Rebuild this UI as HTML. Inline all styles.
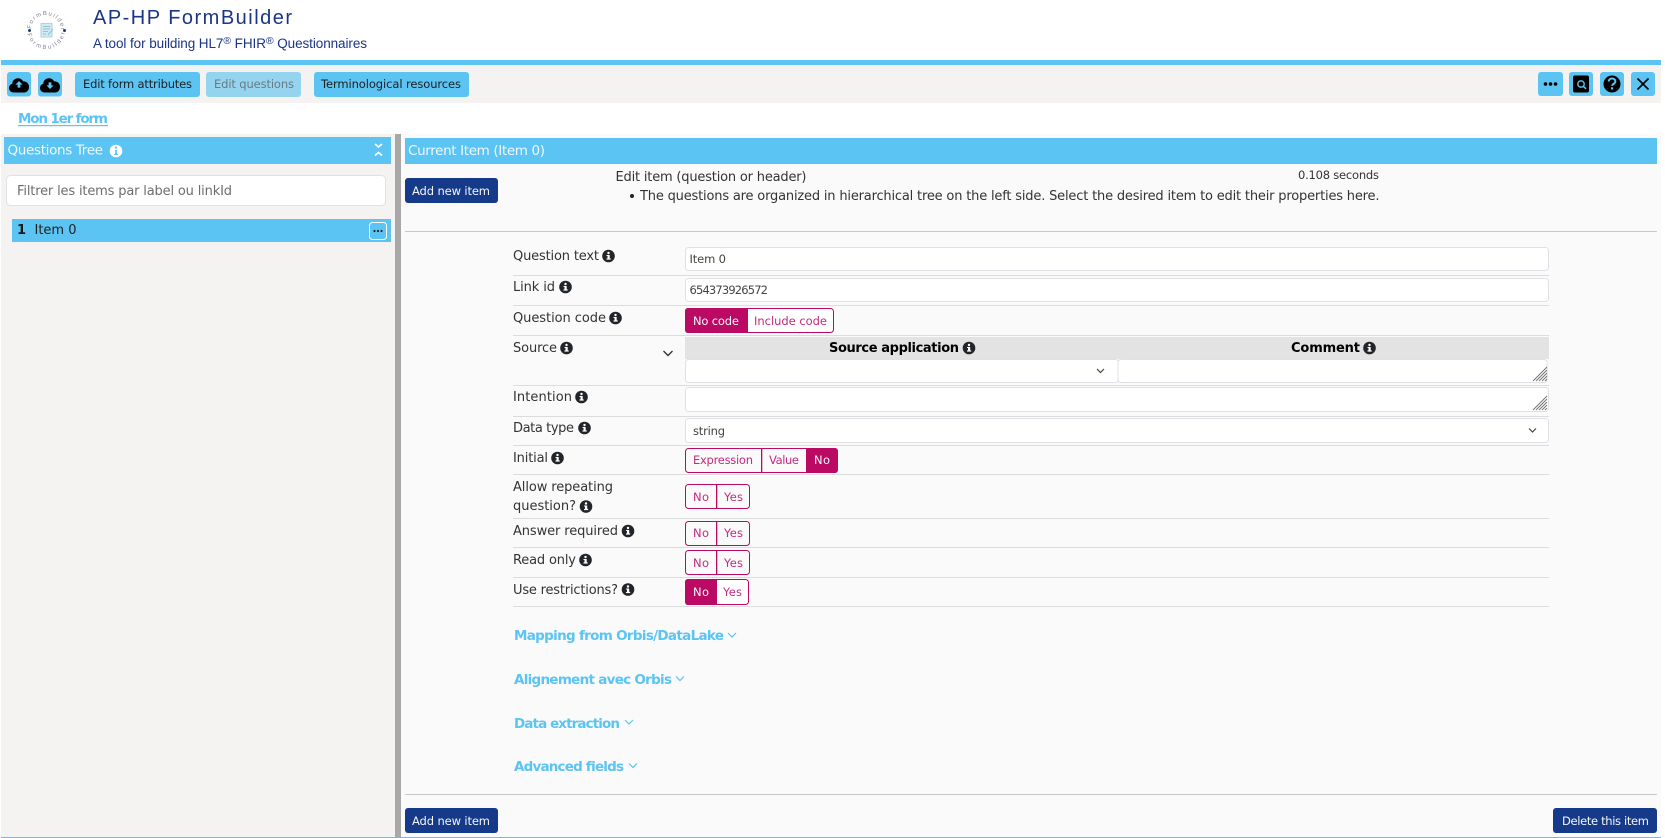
<!DOCTYPE html>
<html lang="en"><head><meta charset="utf-8"><title>AP-HP FormBuilder</title>
<style>
html,body{margin:0;padding:0;background:#fff;width:1665px;height:838px;overflow:hidden}
svg{position:absolute;left:0;top:0;display:block}
text{font-family:"DejaVu Sans",sans-serif;font-size:12.5px;fill:#333;white-space:pre}
.h{font-family:"Liberation Sans",sans-serif;fill:#1a3585}
.l{font-size:13px;fill:#333}
.b{font-size:11.5px;fill:#1f1f1f}
.w{font-size:11.5px;fill:#f4f6fb}
.in{font-size:11.5px;fill:#444}
.m{font-size:11.5px;fill:#c42a80}
.s{font-size:13.5px;font-weight:bold;fill:#5bc4f3}
.th{font-size:13px;font-weight:bold;fill:#000}
.ln{fill:none;stroke:#5bc4f3;stroke-width:1.2}
.box{fill:#fff;stroke:#dee2e6;stroke-width:1}
.tg{fill:#fafafa;stroke:#bb0a63;stroke-width:1}
.fill{fill:#bb0a63}
.logo{font-size:6px;fill:#7f8a98;font-family:"Liberation Sans",sans-serif}
</style></head><body>
<svg width="1665" height="838" viewBox="0 0 1665 838" xmlns="http://www.w3.org/2000/svg">
<defs>
<g id="inf"><circle r="6.3" fill="#212529"/><rect x="-1" y="-1" width="2.2" height="4" fill="#fff"/><rect x="-2" y="-1" width="2" height="1" fill="#fff"/><rect x="-2" y="2.4" width="4.2" height="1.2" fill="#fff"/><circle cx="0" cy="-3" r="1.2" fill="#fff"/></g>
<g id="cloud"><path d="M-5 7.5C-8.4 7.5-10 5.3-10 3C-10 .8-8.6-.9-6.7-1.3C-6.7-4.6-4-6.8-1-6.8C1.2-6.8 3.2-5.6 4.2-3.6C7.6-4 10 -1.3 10 2C10 5 8 7.5 5 7.5Z" fill="#000"/></g>
<path id="arcT" d="M31 30A15 15 0 0 1 61 30"/><path id="arcB" d="M27 30A19 19 0 0 0 65 30"/>
</defs>

<!-- header -->
<text class="logo" letter-spacing="1.3"><textPath href="#arcT" startOffset="1">FormBuilder</textPath></text>
<text class="logo" letter-spacing="2"><textPath href="#arcB" startOffset="4">FormBuilder</textPath></text>
<circle cx="29.500" cy="30.500" r="1.500" fill="#1c3f70"/><circle cx="64.500" cy="30.500" r="1.500" fill="#1c3f70"/>
<rect x="41" y="23.500" width="11" height="13.500" fill="#d4e9f0" stroke="#a8d5e2" stroke-width="1"/>
<path d="M43 26.500h7M43 29h7M43 31.500h5M43 34h3M48 35l5-6" stroke="#8cc6d6" stroke-width="1" fill="none"/>
<text class="h" x="93" y="24" textLength="199" style="font-size:20px">AP-HP FormBuilder</text>
<text class="h" x="93" y="48" textLength="274" style="font-size:13.5px">A tool for building HL7<tspan font-size="10.500" dy="-4">®</tspan><tspan dy="4"> FHIR</tspan><tspan font-size="10.500" dy="-4">®</tspan><tspan dy="4"> Questionnaires</tspan></text>

<rect x="1" y="60" width="1660" height="5" fill="#5bc4f3"/>
<rect x="1" y="65" width="1660" height="38" fill="#f4f3f2"/>

<!-- toolbar -->
<g fill="#5bc4f3">
<rect x="7" y="72" width="24" height="24.500" rx="3"/><rect x="38" y="72" width="24" height="24.500" rx="3"/>
<rect x="75" y="72" width="125" height="25" rx="3"/>
<rect x="206" y="72" width="95" height="25" rx="3" fill="#94d4ef"/>
<rect x="314" y="72" width="155" height="25" rx="3"/>
<rect x="1538" y="72" width="25" height="24" rx="3"/><rect x="1569" y="72" width="24" height="24" rx="3"/><rect x="1600" y="72" width="24" height="24" rx="3"/><rect x="1631" y="72" width="24" height="24" rx="3"/>
</g>
<use href="#cloud" x="19" y="85"/>
<path d="M19 81l-3.600 3.600h2.200v3h2.800v-3h2.200z" fill="#5bc4f3"/>
<use href="#cloud" x="50" y="85"/>
<path d="M50 89l-3.600-3.600h2.200v-3h2.800v3h2.200z" fill="#5bc4f3"/>
<text class="b" x="83" y="88" textLength="109">Edit form attributes</text>
<text class="b" x="214" y="88" textLength="80" style="fill:#6a7a82">Edit questions</text>
<text class="b" x="321" y="88" textLength="140">Terminological resources</text>
<circle cx="1545.500" cy="84" r="1.800"/><circle cx="1550.500" cy="84" r="1.800"/><circle cx="1555.500" cy="84" r="1.800"/>
<rect x="1573" y="75.500" width="16" height="17" rx="2" fill="#000"/>
<circle cx="1581" cy="84" r="3.200" fill="none" stroke="#5bc4f3" stroke-width="1.400"/><path d="M1583.400 86.400l2.600 2.400" stroke="#5bc4f3" stroke-width="1.600"/>
<circle cx="1612" cy="84" r="8.500" fill="#000"/>
<path d="M1608.800 81.500c0-2 1.500-3 3.300-3c1.800 0 3.300 1.100 3.300 2.800c0 2.600-3.200 2.400-3.200 4.600" fill="none" stroke="#5bc4f3" stroke-width="2"/><rect x="1611" y="87.300" width="2.200" height="2.200" fill="#5bc4f3"/>
<path d="M1637.500 78.500l11 11M1648.500 78.500l-11 11" stroke="#000" stroke-width="1.600"/>

<text x="18" y="123" textLength="90" style="font-size:13.5px;font-weight:bold;fill:#5bc4f3">Mon 1er form</text>
<rect x="18" y="125" width="90" height="1.200" fill="#5bc4f3"/>

<!-- panels -->
<rect x="1" y="134" width="394" height="703" fill="#f4f3f2"/>
<rect x="395" y="134" width="6" height="703" fill="#a8a8a8"/>
<rect x="401" y="134" width="1260" height="703" fill="#fafafa"/>
<rect x="1" y="837" width="1660" height="1" fill="#6cbfe2"/>

<!-- left panel -->
<rect x="4" y="137" width="387" height="27" fill="#5bc4f3"/>
<text x="7.500" y="154.500" textLength="95.500" style="font-size:13.500px;fill:#eef8fd">Questions Tree</text>
<circle cx="116" cy="151" r="6.300" fill="#fff"/><rect x="115.200" y="150" width="1.800" height="4.400" fill="#5bc4f3"/><rect x="114.200" y="154" width="3.800" height="1" fill="#5bc4f3"/><circle cx="116" cy="147.600" r="1.100" fill="#5bc4f3"/>
<path d="M375 144l3.500 3l3.500-3M375 155.500l3.500-3l3.500 3" fill="none" stroke="#fff" stroke-width="1.800"/>
<rect class="box" x="6.500" y="175.500" width="379" height="30" rx="4"/>
<text x="17" y="195" textLength="215" style="font-size:13px;fill:#6d6d6d">Filtrer les items par label ou linkId</text>
<rect x="12" y="219" width="379" height="23" fill="#5bc4f3"/>
<text x="17" y="234" textLength="8" style="font-size:13px;font-weight:bold;fill:#1a1a1a">1</text>
<text x="34.500" y="234" textLength="42" style="font-size:13px;fill:#222">Item 0</text>
<rect x="369.500" y="222.500" width="17" height="17" rx="3" fill="none" stroke="#fff"/>
<circle cx="374.500" cy="231" r="1.100" fill="#222"/><circle cx="378" cy="231" r="1.100" fill="#222"/><circle cx="381.500" cy="231" r="1.100" fill="#222"/>

<!-- right header -->
<rect x="405" y="138" width="1252" height="26" fill="#5bc4f3"/>
<text x="408" y="155" textLength="137" style="font-size:13.500px;fill:#eef8fd">Current Item (Item 0)</text>
<rect x="405" y="178" width="93" height="25" rx="3" fill="#163a8a"/>
<text class="w" x="412" y="195" textLength="78">Add new item</text>
<text x="615.500" y="181" textLength="191" style="font-size:13px">Edit item (question or header)</text>
<circle cx="632" cy="196" r="2" fill="#222"/>
<text x="640" y="200" textLength="739.500" style="font-size:13px">The questions are organized in hierarchical tree on the left side. Select the desired item to edit their properties here.</text>
<text x="1298" y="179" textLength="81" style="font-size:11.500px">0.108 seconds</text>
<rect x="405" y="231" width="1252" height="1" fill="#c8c8c8"/>

<!-- row lines -->
<g fill="#dcdcdc">
<rect x="513" y="275" width="1036" height="1"/><rect x="513" y="305" width="1036" height="1"/><rect x="513" y="335" width="1036" height="1"/><rect x="513" y="385" width="1036" height="1"/><rect x="513" y="416" width="1036" height="1"/><rect x="513" y="445" width="1036" height="1"/><rect x="513" y="474" width="1036" height="1"/><rect x="513" y="518" width="1036" height="1"/><rect x="513" y="547" width="1036" height="1"/><rect x="513" y="577" width="1036" height="1"/><rect x="513" y="606" width="1036" height="1"/>
</g>

<!-- labels -->
<text class="l" x="513" y="260" textLength="86">Question text</text><use href="#inf" x="608.500" y="256"/>
<text class="l" x="513" y="291" textLength="42">Link id</text><use href="#inf" x="565.500" y="287"/>
<text class="l" x="513" y="322" textLength="93">Question code</text><use href="#inf" x="615.500" y="318"/>
<text class="l" x="513" y="352" textLength="44">Source</text><use href="#inf" x="566.500" y="348"/>
<text class="l" x="513" y="401" textLength="59">Intention</text><use href="#inf" x="581.500" y="397"/>
<text class="l" x="513" y="432" textLength="61">Data type</text><use href="#inf" x="584.500" y="428"/>
<text class="l" x="513" y="462" textLength="35">Initial</text><use href="#inf" x="557.500" y="458"/>
<text class="l" x="513" y="491" textLength="100">Allow repeating</text>
<text class="l" x="513" y="510" textLength="63">question?</text><use href="#inf" x="586" y="506.500"/>
<text class="l" x="513" y="535" textLength="105">Answer required</text><use href="#inf" x="628" y="531"/>
<text class="l" x="513" y="564" textLength="63">Read only</text><use href="#inf" x="585.500" y="560"/>
<text class="l" x="513" y="594" textLength="105">Use restrictions?</text><use href="#inf" x="628" y="589.500"/>

<!-- inputs -->
<rect class="box" x="685.500" y="247.500" width="863" height="23" rx="3"/>
<text class="in" x="689.500" y="263" textLength="36.500">Item 0</text>
<rect class="box" x="685.500" y="278.500" width="863" height="23" rx="3"/>
<text class="in" x="689.500" y="294" textLength="78.500">654373926572</text>

<!-- No code / include -->
<rect class="tg" x="685.500" y="308.500" width="148" height="24" rx="3" style="fill:#fff"/>
<path class="fill" d="M688 308h60v25h-60a3 3 0 0 1-3-3v-19a3 3 0 0 1 3-3z"/>
<text class="w" x="693" y="325" textLength="46">No code</text>
<text class="m" x="754" y="325" textLength="73">Include code</text>

<!-- source table -->
<rect x="685" y="337" width="864" height="22" fill="#e3e3e3"/>
<text class="th" x="829" y="352" textLength="130">Source application</text><use href="#inf" x="969" y="348"/>
<text class="th" x="1291" y="352" textLength="69">Comment</text><use href="#inf" x="1369.500" y="348"/>
<path d="M663.500 351l4.500 4.500l4.500-4.500" fill="none" stroke="#333" stroke-width="1.400"/>
<rect class="box" x="685.500" y="359.500" width="433" height="23" rx="3"/>
<path d="M1097 369l3.500 3.500l3.500-3.500" fill="none" stroke="#444" stroke-width="1.200"/>
<rect class="box" x="1119.500" y="359.500" width="429" height="23" rx="3" transform="translate(-1.500 0)"/>
<path d="M1533 381l14-14M1536 381l11-11M1539 381l8-8M1542 381l5-5M1545 381l2-2" stroke="#777" stroke-width="1" fill="none"/>
<rect class="box" x="685.500" y="387.500" width="863" height="24" rx="3"/>
<path d="M1533 410l14-14M1536 410l11-11M1539 410l8-8M1542 410l5-5M1545 410l2-2" stroke="#777" stroke-width="1" fill="none"/>
<rect class="box" x="685.500" y="418.500" width="863" height="24" rx="3"/>
<text class="in" x="693" y="435" textLength="32">string</text>
<path d="M1532 428.500l3.500 3.500l3.500-3.500" transform="translate(-3 0)" fill="none" stroke="#444" stroke-width="1.200"/>

<!-- initial -->
<rect class="tg" x="685.500" y="448.500" width="152" height="24" rx="3"/>
<path class="fill" d="M761 448h1.300v25h-1.300zM806 448h29a3 3 0 0 1 3 3v19a3 3 0 0 1-3 3h-29z"/>
<text class="m" x="693" y="464" textLength="60">Expression</text>
<text class="m" x="769" y="464" textLength="30">Value</text>
<text class="w" x="814" y="464" textLength="16">No</text>

<!-- yes/no -->
<rect class="tg" x="685.500" y="484.500" width="64" height="24" rx="3"/><rect class="fill" x="716" y="484" width="1.300" height="25"/>
<text class="m" x="693" y="501" textLength="16">No</text><text class="m" x="724" y="501" textLength="19">Yes</text>
<rect class="tg" x="685.500" y="521.500" width="64" height="24" rx="3"/><rect class="fill" x="716" y="521" width="1.300" height="25"/>
<text class="m" x="693" y="537" textLength="16">No</text><text class="m" x="724" y="537" textLength="19">Yes</text>
<rect class="tg" x="685.500" y="550.500" width="64" height="24" rx="3"/><rect class="fill" x="716" y="550" width="1.300" height="25"/>
<text class="m" x="693" y="567" textLength="16">No</text><text class="m" x="724" y="567" textLength="19">Yes</text>
<rect class="tg" x="685.500" y="579.500" width="63" height="25" rx="3" style="fill:#fff"/>
<path class="fill" d="M688 579h29v26h-29a3 3 0 0 1-3-3v-20a3 3 0 0 1 3-3z"/>
<text class="w" x="693" y="596" textLength="16">No</text><text class="m" x="723" y="596" textLength="19">Yes</text>

<!-- sections -->
<text class="s" x="514" y="640" textLength="210">Mapping from Orbis/DataLake</text><path class="ln" d="M728 633l4 4l4-4"/>
<text class="s" x="514" y="684" textLength="158">Alignement avec Orbis</text><path class="ln" d="M676 676.500l4 4l4-4"/>
<text class="s" x="514" y="728" textLength="106">Data extraction</text><path class="ln" d="M625 720l4 4l4-4"/>
<text class="s" x="514" y="771" textLength="110">Advanced fields</text><path class="ln" d="M629 763.500l4 4l4-4"/>

<!-- footer -->
<rect x="405" y="794" width="1252" height="1" fill="#c8c8c8"/>
<rect x="405" y="808" width="93" height="25" rx="3" fill="#163a8a"/>
<text class="w" x="412" y="825" textLength="78">Add new item</text>
<rect x="1553" y="808" width="104" height="25" rx="3" fill="#163a8a"/>
<text class="w" x="1562" y="825" textLength="87">Delete this item</text>
</svg>
</body></html>
